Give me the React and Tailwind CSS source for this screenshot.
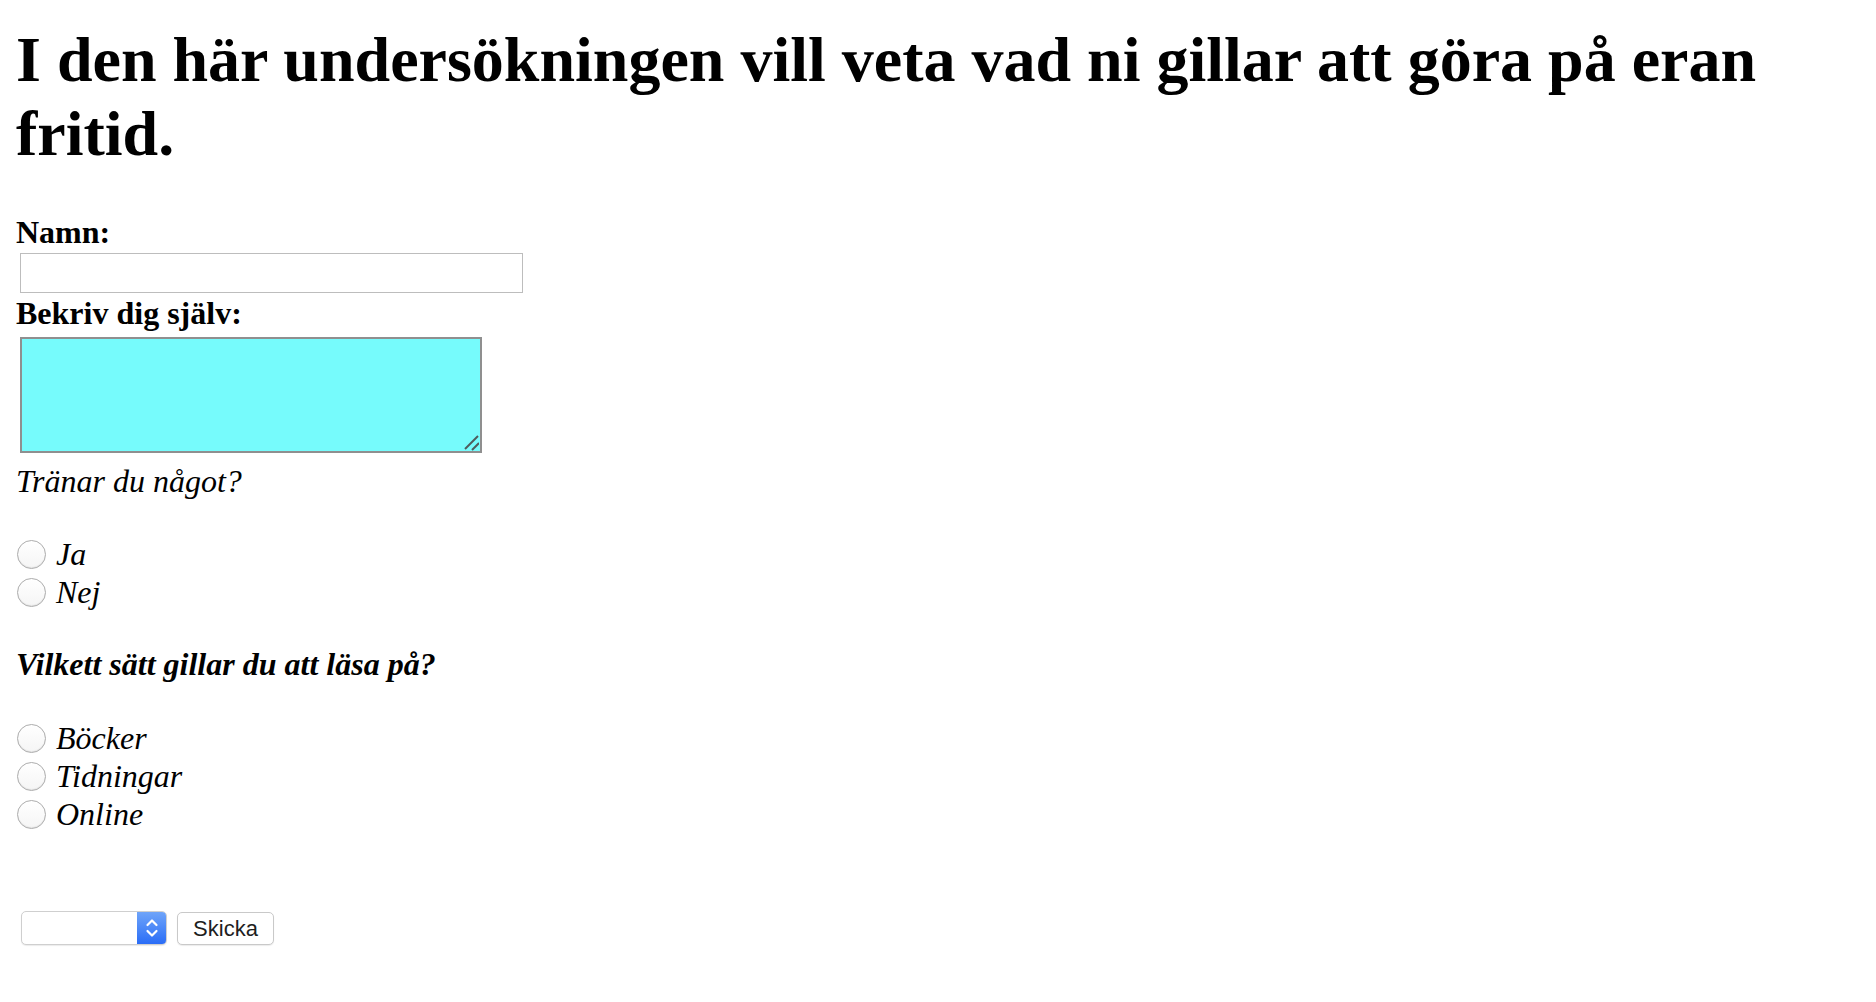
import React from 'react';

const RadioRow = ({ name, label }) => (
  <label className="flex h-[38px] items-center">
    <input
      type="radio"
      name={name}
      className="ml-[1px] h-[29px] w-[29px] shrink-0 appearance-none rounded-full border border-[#acacac] bg-linear-to-b from-white to-[#f5f5f5] shadow-[inset_0_-1px_1px_rgba(0,0,0,0.07)]"
    />
    <span className="ml-[10px] text-[32px] italic leading-[37px]">{label}</span>
  </label>
);

export default function App() {
  return (
    <div className="min-h-screen bg-white pl-4 pt-[23px] font-['Liberation_Serif','Times_New_Roman',serif] text-black">
      <h1 className="mb-[43px] text-[64px] font-bold leading-[74px]">
        I den här undersökningen vill veta vad ni gillar att göra på eran fritid.
      </h1>

      <form onSubmit={(e) => e.preventDefault()}>
        {/* Namn */}
        <label className="block text-[32px] font-bold leading-[37px]">Namn:</label>
        <input
          type="text"
          className="ml-[4px] mt-[2px] block h-[40px] w-[503px] border border-[#bdbdbd] bg-white outline-none"
        />

        {/* Beskrivning */}
        <label className="mt-[2px] block text-[32px] font-bold leading-[37px]">Bekriv dig själv:</label>
        <div className="relative ml-[4px] mt-[5px] h-[116px] w-[462px]">
          <textarea className="block h-full w-full resize-none border-2 border-[#8f8f8f] bg-[#76fbfc] outline-none" />
          <svg
            className="pointer-events-none absolute bottom-[2px] right-[3px]"
            width="16"
            height="16"
            viewBox="0 0 16 16"
          >
            <line x1="2" y1="14" x2="15" y2="1" stroke="#4f5b5c" strokeWidth="2" />
            <line x1="9" y1="15" x2="16" y2="8" stroke="#4f5b5c" strokeWidth="2" />
          </svg>
        </div>

        {/* Träning */}
        <p className="mt-[10px] text-[32px] italic leading-[37px]">Tränar du något?</p>
        <div className="mt-[35px]">
          <RadioRow name="tranar" label="Ja" />
          <RadioRow name="tranar" label="Nej" />
        </div>

        {/* Läsning */}
        <p className="mt-[35px] text-[32px] font-bold italic leading-[37px]">
          Vilkett sätt gillar du att läsa på?
        </p>
        <div className="mt-[36px]">
          <RadioRow name="lasa" label="Böcker" />
          <RadioRow name="lasa" label="Tidningar" />
          <RadioRow name="lasa" label="Online" />
        </div>

        {/* Skicka */}
        <div className="ml-[5px] mt-[78px] flex items-center gap-[10px] pb-10 font-['Liberation_Sans',Arial,sans-serif]">
          <div className="flex h-[34px] w-[146px] overflow-hidden rounded-[5px] border border-[#cfcfcf] bg-white shadow-[0_1px_1px_rgba(0,0,0,0.08)]">
            <div className="flex-1" />
            <div className="flex w-[29px] items-center justify-center bg-linear-to-b from-[#6fa4f9] to-[#2a6cf6]">
              <svg width="14" height="22" viewBox="0 0 14 22" fill="none">
                <path d="M2.5 8 L7 3.5 L11.5 8" stroke="white" strokeWidth="2.2" strokeLinecap="round" strokeLinejoin="round" />
                <path d="M2.5 14 L7 18.5 L11.5 14" stroke="white" strokeWidth="2.2" strokeLinecap="round" strokeLinejoin="round" />
              </svg>
            </div>
          </div>
          <button
            type="submit"
            className="flex h-[33px] w-[97px] items-center justify-center rounded-[5px] border border-[#c9c9c9] bg-white text-[22px] text-[#1e1e1e] shadow-[0_1px_1px_rgba(0,0,0,0.08)]"
          >
            Skicka
          </button>
        </div>
      </form>
    </div>
  );
}
